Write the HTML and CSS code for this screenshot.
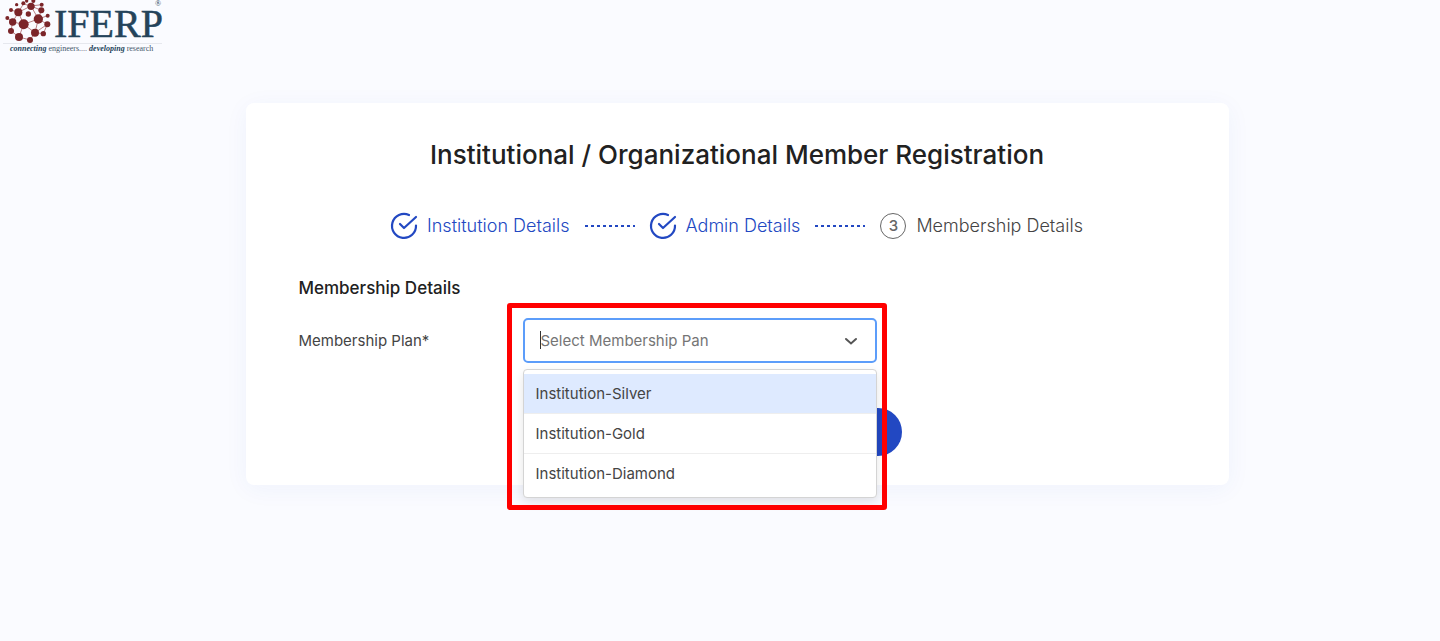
FILE: index.html
```html
<!DOCTYPE html>
<html lang="en">
<head>
  <meta charset="UTF-8" />
  <meta name="viewport" content="width=device-width, initial-scale=1.0" />
  <title>IFERP Member Registration</title>
  <link rel="stylesheet" href="styles.css">
</head>
<body>
  <!-- Site header with logo -->
  <header class="site-header">
    <svg class="logo" viewBox="0 0 168 56" role="img" aria-label="IFERP">
      <g transform="scale(0.3333)">
        <g stroke="#b98084" stroke-width="3" fill="none">
          <path d="M55 37L93 18L124 31L115 57L71 73L55 37L38 66L71 73L57 111L33 93L38 66" />
          <path d="M93 18L115 57L142 73L105 98L71 73M105 98L90 120L57 111M115 57L105 98L130 101M115 57L143 47M38 66L22 54M55 37L33 30M55 37L70 12L93 18L125 14M142 73L130 101" />
        </g>
        <g fill="#7b2529">
          <circle cx="93" cy="19" r="11" /><circle cx="70" cy="10" r="6" /><circle cx="50" cy="14" r="5" />
          <circle cx="100" cy="3" r="6" /><circle cx="80" cy="3" r="5" /><circle cx="125" cy="14" r="6" />
          <circle cx="33" cy="30" r="6" /><circle cx="55" cy="37" r="12" /><circle cx="85" cy="42" r="8" />
          <circle cx="124" cy="31" r="9" /><circle cx="143" cy="47" r="6" /><circle cx="115" cy="57" r="14" />
          <circle cx="22" cy="54" r="6" /><circle cx="38" cy="66" r="11" /><circle cx="71" cy="73" r="15" />
          <circle cx="142" cy="73" r="9" /><circle cx="33" cy="93" r="9" /><circle cx="57" cy="111" r="12" />
          <circle cx="105" cy="98" r="12" /><circle cx="130" cy="101" r="8" /><circle cx="90" cy="120" r="9" />
        </g>
      </g>
      <path d="M3 43.500H162" stroke="#e6e8ee" />
      <text class="logo-name" x="54" y="37">IFERP</text>
      <text class="logo-mark" x="155" y="6">®</text>
      <text class="logo-tagline" x="10" y="51"><tspan class="strong">connecting</tspan> engineers.... <tspan class="strong">developing</tspan> research</text>
    </svg>
  </header>

  <!-- Registration card -->
  <main class="card">
    <h1>Institutional / Organizational Member Registration</h1>

    <ol class="steps">
      <li class="step done">
        <svg class="step-icon" viewBox="0 0 26 26" aria-hidden="true">
          <path d="M18 2A12 12 0 1 0 25 12.500" />
          <path d="M9 11L13 15L25 4" />
        </svg>
        <span>Institution Details</span>
      </li>
      <li class="line" aria-hidden="true"></li>
      <li class="step done">
        <svg class="step-icon" viewBox="0 0 26 26" aria-hidden="true">
          <path d="M18 2A12 12 0 1 0 25 12.500" />
          <path d="M9 11L13 15L25 4" />
        </svg>
        <span>Admin Details</span>
      </li>
      <li class="line" aria-hidden="true"></li>
      <li class="step">
        <span class="step-number">3</span>
        <span>Membership Details</span>
      </li>
    </ol>

    <form>
      <h2>Membership Details</h2>
      <div class="form-row">
        <label for="plan">Membership Plan*</label>
        <div class="field">
          <select id="plan">
            <option value="">Select Membership Pan</option>
            <option>Institution-Silver</option>
            <option>Institution-Gold</option>
            <option>Institution-Diamond</option>
          </select>
          <span class="caret"></span>
          <svg class="chevron" viewBox="0 0 14 14" aria-hidden="true"><path d="M2 5L7 9.500L12 5" /></svg>
          <!-- Open plan menu -->
          <ul class="menu" role="listbox" aria-label="Membership Plan">
            <li role="option" class="active" aria-selected="true">Institution-Silver</li>
            <li role="option">Institution-Gold</li>
            <li role="option">Institution-Diamond</li>
          </ul>
          <div class="highlight"></div>
        </div>
      </div>
      <div class="actions">
        <button type="submit" class="button" aria-label="Continue"></button>
      </div>
    </form>
  </main>
</body>
</html>
```
FILE: styles.css
```css
/* General */
* { box-sizing: border-box; }
body { margin: 0; font-family: Inter, "Liberation Sans", sans-serif; background: #fafbff; color: #212121; }

/* Header */
.site-header { height: 56px; }
.logo { display: block; width: 168px; height: 56px; }
.logo-name { font: 40px "Liberation Serif", serif; fill: #24435a; stroke: #24435a; stroke-width: 0.5px; }
.logo-mark { font: 8px "Liberation Serif", serif; fill: #24435a; }
.logo-tagline { font: 8px "Liberation Serif", serif; fill: #46586c; }
.logo-tagline .strong { font-weight: bold; font-style: italic; fill: #24435a; }

/* Card */
.card { width: calc(100% - 457px); min-width: 800px; margin: 47px auto 48px; padding: 32px 53px 29px; background: white; border-radius: 8px; box-shadow: 0 4px 24px rgba(34, 70, 193, 0.05); position: relative; left: 17px; }
h1 { margin: 0; font-size: 26px; line-height: 40px; font-weight: 500; text-align: center; }

/* Steps */
.steps { display: flex; justify-content: center; align-items: center; gap: 15px; margin: 37px 0 0; padding: 0; list-style: none; }
.step { display: flex; align-items: center; gap: 10px; font-size: 18px; line-height: 27px; font-weight: 300; color: #444; }
.step.done { color: #2248c2; }
.step-icon { width: 26px; height: 26px; fill: none; stroke: #2248c2; stroke-width: 2.2; stroke-linecap: round; stroke-linejoin: round; overflow: visible; }
.step-number { width: 26px; height: 26px; border: 1px solid #666; border-radius: 50%; font-size: 15px; line-height: 24px; font-weight: 500; text-align: center; color: #666; }
.line { width: 50px; height: 2px; background: repeating-linear-gradient(to right, #2248c2 0 3px, transparent 3px 6px); }

/* Form */
h2 { margin: 36px 0 17px; font-size: 17px; line-height: 26px; font-weight: 500; }
.form-row { display: grid; grid-template-columns: 224px 354px; align-items: center; font-size: 15px; }
.form-row label { color: #444; }
.field { position: relative; }
.field select { display: block; width: 100%; height: 45px; padding: 0 16px; appearance: none; background: white; border: 2px solid #5c9dfa; border-radius: 5px; font: inherit; color: #757575; }
.caret { position: absolute; left: 17px; top: 13px; width: 1px; height: 18px; background: #333; }
.chevron { position: absolute; right: 19px; top: 16px; width: 14px; height: 14px; fill: none; stroke: #555; stroke-width: 2; stroke-linecap: round; }
.menu { position: absolute; z-index: 1; top: 51px; left: 0; right: 0; margin: 0; padding: 4px 0 3px; list-style: none; background: white; border: 1px solid #d4d4d4; border-radius: 4px; box-shadow: 0 4px 11px rgba(0, 0, 0, 0.1); color: #444; }
.menu li { height: 40px; padding: 0 12px; line-height: 39px; border-bottom: 1px solid #eee; }
.menu li:last-child { border-bottom: none; }
.menu .active { background: #deeaff; }
.highlight { position: absolute; z-index: 2; top: -15px; right: -10px; bottom: -147px; left: -16px; border: 5px solid red; border-radius: 3px; pointer-events: none; }

/* Actions */
.actions { display: flex; justify-content: center; margin-top: 45px; }
.button { width: 330px; height: 48px; background: #2248c2; border: none; border-radius: 24px; }
```
